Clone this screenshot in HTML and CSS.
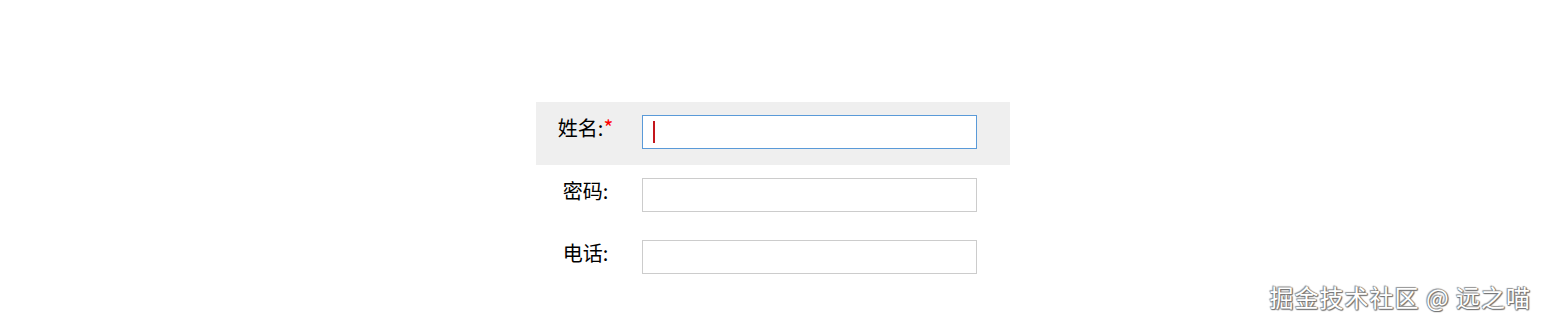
FILE: index.html
```html
<!DOCTYPE html>
<html lang="zh-CN">
<head>
<meta charset="utf-8">
<title>表单</title>
<link rel="stylesheet" href="styles.css">
</head>
<body>
<form class="form">
  <div class="row row-active">
    <label class="label">姓名:<span class="req">*</span></label>
    <div class="field">
      <input class="input input-focus" type="text">
      <span class="caret"></span>
    </div>
  </div>
  <div class="row">
    <label class="label">密码:</label>
    <div class="field">
      <input class="input" type="password">
    </div>
  </div>
  <div class="row">
    <label class="label">电话:</label>
    <div class="field">
      <input class="input" type="text">
    </div>
  </div>
</form>
<div class="watermark">掘金技术社区 @ 远之喵</div>
</body>
</html>
```

FILE: styles.css
```css
html, body {
  margin: 0;
  padding: 0;
  background: #fff;
}
body {
  width: 1545px;
  height: 326px;
  position: relative;
  overflow: hidden;
  font-family: "Noto Sans CJK SC", "Noto Sans", sans-serif;
  color: #000;
}
.form {
  width: 474px;
  margin: 102px auto 0;
}
.row {
  display: flex;
  align-items: flex-start;
  height: 62px;
  box-sizing: border-box;
  padding-top: 13px;
}
.row-active {
  height: 63px;
  background: #efefef;
}
.label {
  width: 100px;
  margin-right: 6px;
  text-align: center;
  font-size: 20px;
  line-height: 25px;
}
.req {
  color: #f00;
  font-size: 21px;
}
.field {
  position: relative;
}
.input {
  display: block;
  width: 335px;
  height: 34px;
  box-sizing: border-box;
  margin: 0;
  padding: 0 8px;
  border: 1px solid #cccccc;
  background: #fff;
  outline: none;
  font: inherit;
}
.input-focus {
  border-color: #5a9ad8;
}
.caret {
  position: absolute;
  left: 11px;
  top: 6px;
  width: 2px;
  height: 22px;
  background: #c4161c;
}
.watermark {
  position: absolute;
  right: 14px;
  bottom: 15px;
  font-size: 24px;
  line-height: 28px;
  color: #fff;
  text-shadow: 0 0 1px #666, 1px 1px 1px #777, -1px -1px 1px #999, 1px 0 1px #888, 0 1px 1px #888;
  letter-spacing: 1px;
}
```
